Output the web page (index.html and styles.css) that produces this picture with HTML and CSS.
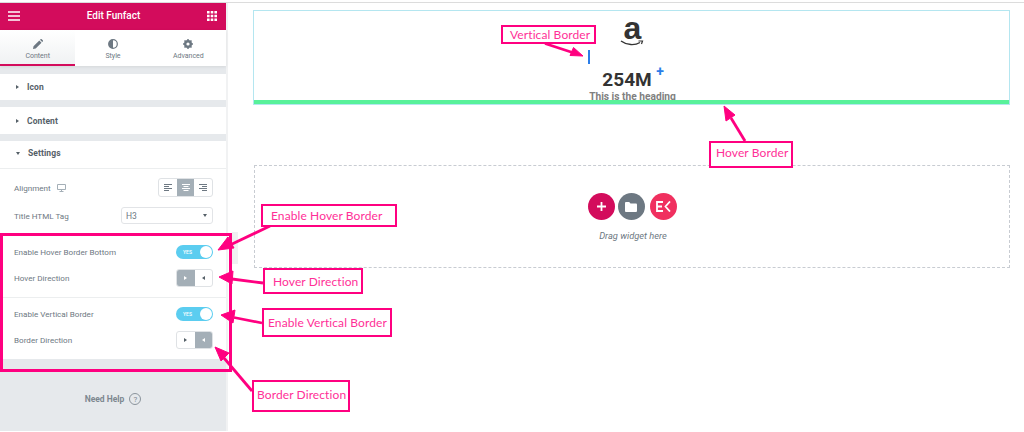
FILE: index.html
```html
<!DOCTYPE html>
<html lang="en">
<head>
<meta charset="utf-8">
<title>Edit Funfact</title>
<link rel="stylesheet" href="styles.css">
</head>
<body>
<div class="page">
  <aside class="panel">
    <header class="panel-head">
      <svg class="ico-w" width="12" height="10" viewBox="0 0 12 10"><path d="M0 1h12M0 5h12M0 9h12" stroke="#fff" stroke-width="1.6"/></svg>
      <span class="panel-title">Edit Funfact</span>
      <svg class="ico-w" width="10" height="10" viewBox="0 0 10 10" fill="#fff"><path d="M0 0h2.6v2.6H0zM3.7 0h2.6v2.6H3.7zM7.4 0H10v2.6H7.4zM0 3.7h2.6v2.6H0zM3.7 3.7h2.6v2.6H3.7zM7.4 3.7H10v2.6H7.4zM0 7.4h2.6V10H0zM3.7 7.4h2.6V10H3.7zM7.4 7.4H10V10H7.4z"/></svg>
    </header>
    <nav class="tabs">
      <div class="tab tab-active">
        <svg width="10" height="10" viewBox="0 0 10 10" fill="#6d7882"><path d="M0 10l.5-2.7L6.3 1.5l2.2 2.2L2.7 9.5zM7 .8l.6-.6a.8.8 0 0 1 1.1 0l1.1 1.1a.8.8 0 0 1 0 1.1l-.6.6z"/></svg>
        <span>Content</span>
      </div>
      <div class="tab">
        <svg width="10" height="10" viewBox="0 0 10 10"><circle cx="5" cy="5" r="4.3" fill="none" stroke="#6d7882" stroke-width="1.2"/><path d="M5 .7a4.3 4.3 0 0 1 0 8.6z" fill="#6d7882" transform="matrix(-1 0 0 1 10 0)"/></svg>
        <span>Style</span>
      </div>
      <div class="tab">
        <svg width="10" height="10" viewBox="0 0 10 10"><circle cx="5" cy="5" r="3" fill="none" stroke="#6d7882" stroke-width="2"/><path d="M5 0v10M0 5h10M1.5 1.5l7 7M8.5 1.5l-7 7" stroke="#6d7882" stroke-width="1.5"/><circle cx="5" cy="5" r="1.6" fill="#fff"/></svg>
        <span>Advanced</span>
      </div>
    </nav>
    <section class="sec sec-first"><span class="tri-r"></span><span class="sec-name">Icon</span></section>
    <section class="sec"><span class="tri-r"></span><span class="sec-name">Content</span></section>
    <section class="sec sec-open"><span class="tri-d"></span><span class="sec-name">Settings</span></section>
    <div class="settings">
      <div class="row row-align">
        <span class="lab">Alignment
          <svg class="mon" width="9" height="8" viewBox="0 0 9 8"><path d="M.5.5h8v5h-8zM4.5 5.500V7.500M2.500 7.500h4" fill="none" stroke="#a4afb7"/></svg>
        </span>
        <div class="seg seg-3">
          <span class="seg-b"><svg width="8" height="7" viewBox="0 0 8 7"><path d="M0 .5h8M0 2.500h5M0 4.500h8M0 6.500h5" stroke="#6d7882"/></svg></span>
          <span class="seg-b on"><svg width="8" height="7" viewBox="0 0 8 7"><path d="M0 .5h8M1.500 2.500h5M0 4.500h8M1.500 6.500h5" stroke="#fff"/></svg></span>
          <span class="seg-b"><svg width="8" height="7" viewBox="0 0 8 7"><path d="M0 .5h8M3 2.500h5M0 4.500h8M3 6.500h5" stroke="#6d7882"/></svg></span>
        </div>
      </div>
      <div class="row row-tag">
        <span class="lab">Title HTML Tag</span>
        <div class="select"><span>H3</span><span class="tri-d tri-s"></span></div>
      </div>
      <div class="row row-hb">
        <span class="lab">Enable Hover Border Bottom</span>
        <div class="toggle"><span class="yes">YES</span><span class="knob"></span></div>
      </div>
      <div class="row row-hd">
        <span class="lab">Hover Direction</span>
        <div class="seg seg-2">
          <span class="seg-b on"><span class="tri-r tri-w"></span></span>
          <span class="seg-b"><span class="tri-l"></span></span>
        </div>
      </div>
      <div class="row row-ev">
        <span class="lab">Enable Vertical Border</span>
        <div class="toggle"><span class="yes">YES</span><span class="knob"></span></div>
      </div>
      <div class="row row-bd">
        <span class="lab">Border Direction</span>
        <div class="seg seg-2">
          <span class="seg-b"><span class="tri-r"></span></span>
          <span class="seg-b on"><span class="tri-l tri-w"></span></span>
        </div>
      </div>
    </div>
    <div class="help">
      <span>Need Help</span>
      <span class="help-q">?</span>
    </div>
  </aside>

  <main class="canvas">
    <section class="widget">
      <div class="brand">
        <span class="brand-a">a</span>
        <svg class="smile" width="24" height="8" viewBox="0 0 24 8"><path d="M1 1c6 4.500 14 4.500 19 1.500" fill="none" stroke="#333" stroke-width="1.400"/><path d="M18.500 1h4l-1 3" fill="none" stroke="#333" stroke-width="1.200"/></svg>
      </div>
      <span class="vbar"></span>
      <div class="num">254M<span class="plus">+</span></div>
      <div class="heading">This is the heading</div>
      <span class="hover-bar"></span>
    </section>
    <section class="drop">
      <div class="drop-btns">
        <span class="circle c-add"><svg width="9" height="9" viewBox="0 0 9 9"><path d="M4.500 0v9M0 4.500h9" stroke="#fff" stroke-width="1.800"/></svg></span>
        <span class="circle c-dir"><svg width="12" height="10" viewBox="0 0 12 10" fill="#fff"><path d="M0 1.200C0 .5.500 0 1.200 0h3l1.300 1.500h5.300c.7 0 1.200.5 1.200 1.200v6c0 .7-.5 1.300-1.200 1.300H1.200C.5 10 0 9.400 0 8.700z"/></svg></span>
        <span class="circle c-ek"><svg width="15" height="11" viewBox="0 0 15 11" fill="none" stroke="#fff" stroke-width="1.800"><path d="M7 1H1v9h6M1 5.500h5M14 .5L9.500 5.500l4.500 5"/></svg></span>
      </div>
      <div class="drop-text">Drag widget here</div>
    </section>
  </main>
</div>

<div class="note-frame"></div>
<div class="scroll-hint"></div>
<svg class="arrows" width="1024" height="432" viewBox="0 0 1024 432">
  <g stroke="#ff0080" stroke-width="2.800" fill="#ff0080">
    <path d="M545 43.500L574 53"/><path d="M583 56l-13-.5 3.500-8z" stroke-width="1"/>
    <path d="M270 226L230 245"/><path d="M218 250l10-13 6 11z" stroke-width="1"/>
    <path d="M263 283L232 279"/><path d="M219 277l14-6-1 13z" stroke-width="1"/>
    <path d="M262 323L234 317.500"/><path d="M221 315l14-5-2 13z" stroke-width="1"/>
    <path d="M252 391L224 358"/><path d="M215 347l14 6-8 8z" stroke-width="1"/>
    <path d="M745 141L731 118"/><path d="M724 106l11 9-9 6z" stroke-width="1"/>
  </g>
</svg>
<div class="note n-vb">Vertical Border</div>
<div class="note n-hb">Enable Hover Border</div>
<div class="note n-hd">Hover Direction</div>
<div class="note n-ev">Enable Vertical Border</div>
<div class="note n-bd">Border Direction</div>
<div class="note n-hv">Hover Border</div>
</body>
</html>
```
FILE: styles.css
```css
* { box-sizing: border-box; }
html, body { margin: 0; padding: 0; width: 1024px; height: 432px; overflow: hidden; background: #fff; }
body { font-family: Roboto, "Liberation Sans", sans-serif; position: relative; }

.page { display: flex; margin-top: 2px; border-top: 1px solid #dcdcdc; height: 429px; }

/* panel */
.panel { width: 228px; flex: none; display: flex; flex-direction: column; background: #e6e9ec; border-right: 2px solid #f1f2f3; }
.panel-head { height: 27px; background: #d30c5c; display: flex; align-items: center; justify-content: space-between; padding: 0 9px 2px 8px; }
.panel-title { color: #fff; font-size: 10px; font-weight: 500; }
.tabs { display: flex; height: 36px; background: #fff; box-shadow: 0 1px 3px rgba(0,0,0,.08); }
.tab { flex: 1; display: flex; flex-direction: column; align-items: center; padding-top: 9px; gap: 3px; font-size: 7px; color: #6d7882; }
.tab-active { background: linear-gradient(#fff, #f0f2f3); border-bottom: 2px solid #d30c5c; }
.sec { height: 27px; margin-top: 7px; background: #fff; display: flex; align-items: center; padding-left: 16px; gap: 8px; font-size: 8.500px; font-weight: 700; color: #556068; }
.sec-first { margin-top: 8px; height: 26px; }
.sec-open { border-bottom: 1px solid #eceeef; height: 28px; padding-bottom: 3px; }
.sec-name { letter-spacing: .1px; }
.tri-r, .tri-l, .tri-d { display: inline-block; width: 0; height: 0; border-style: solid; border-color: transparent; }
.tri-r { border-width: 2.500px 0 2.500px 3px; border-left-color: #556068; }
.tri-l { border-width: 2.500px 3px 2.500px 0; border-right-color: #556068; }
.tri-d { border-width: 3px 2.500px 0; border-top-color: #556068; }
.tri-w.tri-r { border-left-color: #fff; }
.tri-w.tri-l { border-right-color: #fff; }

.settings { background: #fff; height: 190px; padding: 0 13px 0 14px; display: flex; flex-direction: column; }
.row { display: flex; justify-content: space-between; align-items: center; }
.row-align { margin-top: 9px; height: 19px; }
.row-tag { margin-top: 9px; height: 19px; }
.row-hb { margin-top: 20px; height: 14px; }
.row-hd { margin-top: 10px; height: 18px; }
.row-ev { margin-top: 20px; height: 14px; position: relative; }
.row-ev::before { content: ""; position: absolute; left: -14px; right: -13px; top: -10px; height: 1px; background: #eceeef; }
.row-bd { margin-top: 10px; height: 18px; }
.lab { font-size: 8.100px; color: #6d7882; display: flex; align-items: center; gap: 6px; }
.seg { display: flex; height: 18px; border: 1px solid #dfe2e5; border-radius: 3px; overflow: hidden; background: #fff; }
.seg-3 { width: 55px; height: 19px; }
.seg-2 { width: 37px; }
.seg-b { flex: 1; display: flex; align-items: center; justify-content: center; }
.seg-b.on { background: #a4afb7; }
.select { width: 92px; height: 17px; border: 1px solid #e2e4e7; border-radius: 3px; display: flex; align-items: center; justify-content: space-between; padding: 0 5px 0 4px; font-size: 8.500px; color: #6d7882; }
.toggle { width: 37px; height: 14px; border-radius: 7px; background: #5bcdf0; position: relative; display: flex; align-items: center; padding-left: 7px; }
.yes { font-size: 5px; color: #fff; font-weight: 500; }
.knob { position: absolute; right: 1px; top: 1px; width: 12px; height: 12px; border-radius: 50%; background: #fff; }
.help { flex: 1; display: flex; justify-content: center; align-items: center; gap: 5px; font-size: 8.500px; font-weight: 700; color: #7d8790; padding: 8px 0 0 0; }
.help-q { width: 12px; height: 12px; border: 1px solid #8b949c; border-radius: 50%; font-size: 8px; font-weight: 400; display: flex; align-items: center; justify-content: center; }

/* canvas */
.canvas { flex: 1; padding: 7px 14px 0 25px; display: flex; flex-direction: column; min-width: 0; }
.widget { height: 95px; flex: none; border: 1px solid #b4e6f0; position: relative; display: flex; flex-direction: column; align-items: center; overflow: hidden; }
.brand { height: 37px; position: relative; width: 30px; margin-top: 5px; margin-left: 0; flex: none; }
.brand-a { position: absolute; left: 7px; top: -6px; font-family: "Liberation Sans", sans-serif; font-weight: 700; font-size: 32px; line-height: 36px; color: #333; }
.smile { position: absolute; left: 3px; top: 24px; }
.vbar { position: absolute; left: 334px; top: 39px; width: 2px; height: 14px; background: #2b7de9; }
.num { font-size: 19px; font-weight: 700; color: #333; line-height: 20px; margin-top: 17px; position: relative; margin-left: -9px; }
.plus { position: absolute; left: 54px; top: -6px; color: #2b7de9; font-size: 14px; line-height: 14px; }
.heading { font-size: 10.200px; font-weight: 700; color: #808080; line-height: 12px; margin-top: 1px; margin-left: 2px; white-space: nowrap; }
.hover-bar { position: absolute; left: 0; right: 0; bottom: 0; height: 4px; background: #58f19a; }
.drop { height: 103px; flex: none; margin-top: 60px; margin-left: 1px; border: 1px dashed #c8ccd2; display: flex; flex-direction: column; align-items: center; padding-top: 27px; }
.drop-btns { display: flex; gap: 3px; }
.circle { width: 27px; height: 27px; border-radius: 50%; display: flex; align-items: center; justify-content: center; }
.c-add { background: #d30c5c; }
.c-dir { background: #6d7882; }
.c-ek { background: #f0305f; margin-left: 2px; }
.drop-text { font-size: 9.300px; font-style: italic; color: #6d7882; margin-top: 10px; margin-left: 2px; }

/* annotations */
.note-frame { position: absolute; left: 0; top: 233px; width: 232px; height: 139px; border: 3px solid #ff0080; }
.scroll-hint { position: absolute; left: 232px; top: 232px; width: 6px; height: 32px; background: #f0f1f2; }
.arrows { position: absolute; left: 0; top: 0; }
.note { position: absolute; border: 2px solid #ff0080; background: #fff; color: #ff2f97; font-family: Lato, "Open Sans", sans-serif; font-size: 12px; letter-spacing: .1px; display: flex; align-items: center; white-space: nowrap; }
.n-vb { left: 501px; top: 25px; width: 95px; height: 19px; padding-left: 7px; }
.n-hb { left: 261px; top: 204px; width: 136px; height: 23px; padding-left: 8px; }
.n-hd { left: 263px; top: 268px; width: 100px; height: 26px; padding-left: 8px; }
.n-ev { left: 262px; top: 308px; width: 130px; height: 29px; padding-left: 4px; }
.n-bd { left: 252px; top: 380px; width: 98px; height: 32px; padding: 0 0 4px 3px; }
.n-hv { left: 709px; top: 141px; width: 84px; height: 27px; padding: 0 0 4px 5px; }
```
